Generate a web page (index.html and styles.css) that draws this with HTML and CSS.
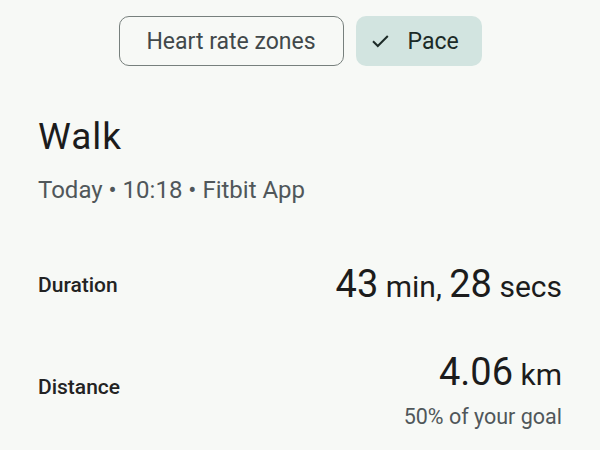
FILE: index.html
```html
<!DOCTYPE html>
<html>
<head>
<meta charset="utf-8">
<link rel="stylesheet" href="styles.css">
</head>
<body>
<div class="page">
  <div class="chips">
    <div class="chip chip-outline">Heart rate zones</div>
    <div class="chip chip-selected">
      <svg class="check" width="17" height="13" viewBox="0 0 17 13"><path d="M1 6.2 L5.8 11 L15.8 1" fill="none" stroke="#1d2b28" stroke-width="2"/></svg>
      <span>Pace</span>
    </div>
  </div>
  <h1 class="title">Walk</h1>
  <div class="subtitle">Today • 10:18 • Fitbit App</div>
  <div class="stat stat-duration">
    <div class="label">Duration</div>
    <div class="value">43<span class="unit"> min, </span>28<span class="unit"> secs</span></div>
  </div>
  <div class="stat stat-distance">
    <div class="label">Distance</div>
    <div class="right">
      <div class="value">4.06<span class="unit"> km</span></div>
      <div class="goal">50% of your goal</div>
    </div>
  </div>
</div>
</body>
</html>
```
FILE: styles.css
```css
html, body {
  margin: 0;
  padding: 0;
  background: #f7f9f6;
}
body {
  font-family: Roboto, "Noto Sans", sans-serif;
  color: #1f1f1f;
}
.page {
  width: 600px;
  height: 450px;
  padding: 16px 38px 0 38px;
  box-sizing: border-box;
}
.chips {
  display: flex;
  justify-content: center;
  gap: 12px;
}
.chip {
  height: 50px;
  box-sizing: border-box;
  border-radius: 10px;
  display: flex;
  align-items: center;
  font-size: 23px;
}
.chip-outline {
  border: 1.5px solid #77807d;
  color: #41484a;
  width: 225px;
  justify-content: center;
}
.chip-selected {
  background: #d2e4e0;
  color: #1b2a27;
  width: 126px;
  padding-left: 16px;
}
.check {
  margin-right: 19px;
}
.title {
  margin: 49px 0 0 0;
  font-weight: 400;
  font-size: 37px;
  letter-spacing: 1px;
  line-height: 44px;
  color: #1c1c1c;
}
.subtitle {
  margin-top: 17px;
  font-size: 24px;
  color: #50575a;
  line-height: 28px;
}
.stat {
  display: flex;
  justify-content: space-between;
  align-items: flex-start;
}
.stat-duration {
  margin-top: 58px;
}
.stat-duration .label {
  margin-top: 11px;
}
.stat-distance {
  margin-top: 41px;
}
.stat-distance .label {
  margin-top: 25px;
}
.label {
  font-size: 21px;
  line-height: 24px;
  font-weight: 500;
  color: #232323;
}
.value {
  font-size: 38px;
  line-height: 44px;
  color: #1c1c1c;
  text-align: right;
}
.unit {
  font-size: 30px;
}
.right {
  display: flex;
  flex-direction: column;
  align-items: flex-end;
}
.goal {
  font-size: 21.5px;
  line-height: 26px;
  color: #50575a;
  margin-top: 7px;
}
```
